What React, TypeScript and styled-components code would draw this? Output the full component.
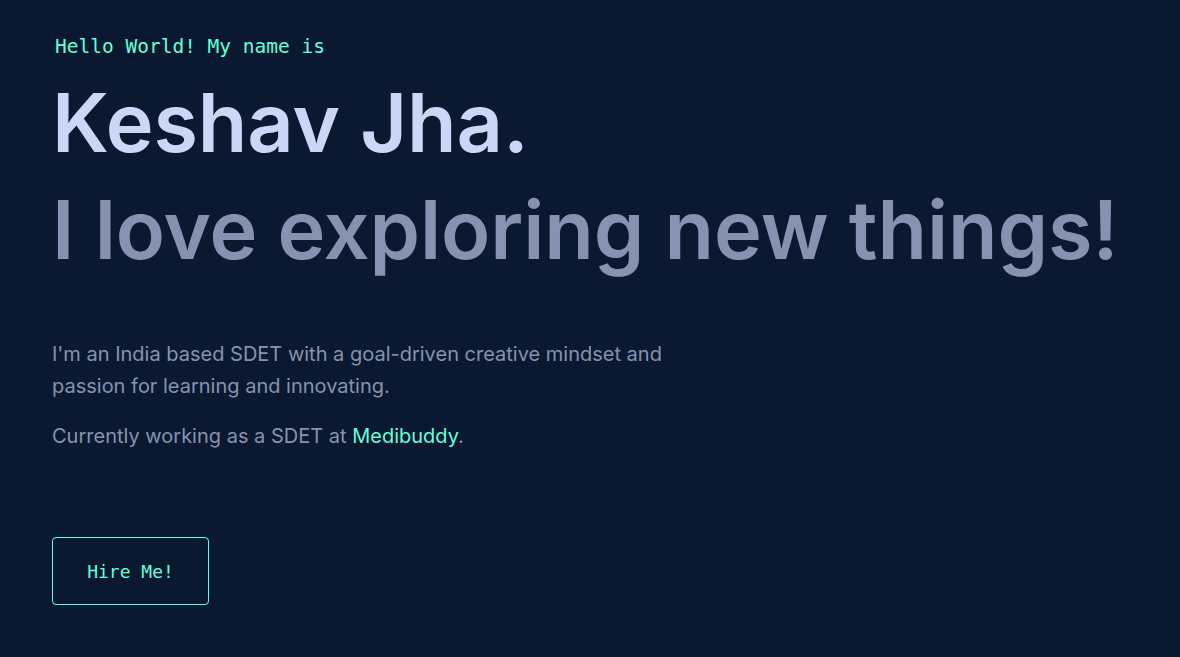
import React from "react";
import styled, { createGlobalStyle } from "styled-components";

const GlobalStyle = createGlobalStyle`
  html, body {
    margin: 0;
    padding: 0;
    background: #0a192f;
  }
  body {
    font-family: Inter, "Open Sans", sans-serif;
    -webkit-font-smoothing: antialiased;
  }
`;

const Hero = styled.section`
  min-height: 657px;
  box-sizing: border-box;
  padding: 35px 52px 0;
  display: flex;
  flex-direction: column;
  align-items: flex-start;
`;

const Greeting = styled.p`
  margin: 0 0 0 3px;
  font-family: "DejaVu Sans Mono", "Liberation Mono", monospace;
  font-size: 19.5px;
  line-height: 24px;
  color: #64ffda;
`;

const BigTitle = styled.h1<{ $muted?: boolean }>`
  margin: 0;
  font-family: Inter, sans-serif;
  font-weight: 600;
  font-size: 81px;
  line-height: 107px;
  letter-spacing: -0.1px;
  color: ${(p) => (p.$muted ? "#8892b0" : "#ccd6f6")};
  white-space: nowrap;
`;

const Titles = styled.div`
  margin-top: 11px;
`;

const About = styled.div`
  margin-top: 54px;
  max-width: 640px;
`;

const Para = styled.p`
  margin: 0 0 18px;
  font-family: Inter, sans-serif;
  font-size: 20px;
  line-height: 32px;
  color: #8892b0;
`;

const Accent = styled.a`
  color: #64ffda;
  text-decoration: none;
`;

const HireButton = styled.a`
  margin-top: 67px;
  box-sizing: border-box;
  width: 157px;
  height: 68px;
  display: inline-flex;
  align-items: center;
  justify-content: center;
  border: 1px solid #64ffda;
  border-radius: 4px;
  font-family: "DejaVu Sans Mono", "Liberation Mono", monospace;
  font-size: 18px;
  color: #64ffda;
  text-decoration: none;
`;

export default function App() {
  return (
    <>
      <GlobalStyle />
      <Hero>
        <Greeting>Hello World! My name is</Greeting>
        <Titles>
          <BigTitle>Keshav Jha.</BigTitle>
          <BigTitle $muted>I love exploring new things!</BigTitle>
        </Titles>
        <About>
          <Para>
            I'm an India based SDET with a goal-driven creative mindset and passion for
            learning and innovating.
          </Para>
          <Para>
            Currently working as a SDET at <Accent href="#">Medibuddy</Accent>.
          </Para>
        </About>
        <HireButton href="#">Hire Me!</HireButton>
      </Hero>
    </>
  );
}
